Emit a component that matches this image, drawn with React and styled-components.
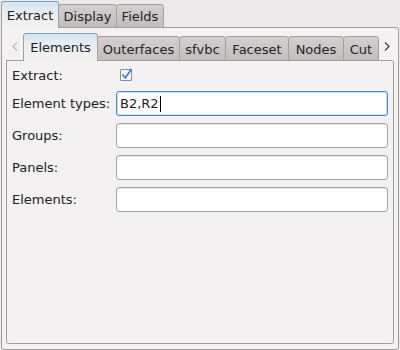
import React from "react";
import styled, { createGlobalStyle } from "styled-components";

const Global = createGlobalStyle`
  html, body { margin: 0; padding: 0; background: #ebe9e9; }
  body { font-family: "DejaVu Sans", "Noto Sans", sans-serif; font-size: 13px; color: #1e1e1e; }
`;

const Window = styled.div`
  width: 398px;
  height: 350px;
  padding-left: 1px;
  display: flex;
  flex-direction: column;
  background: #ebe9e9;
`;

const TabBar = styled.div`
  display: flex;
  align-items: flex-end;
  height: ${(p) => p.$h}px;
  margin-bottom: -1px;
  position: relative;
  z-index: 1;
`;

const Tab = styled.div`
  box-sizing: border-box;
  width: ${(p) => p.$w}px;
  height: ${(p) => (p.$active ? p.$h + 3 : p.$h)}px;
  margin-left: ${(p) => (p.$first ? 0 : -1)}px;
  border: 1px solid #a29e9e;
  border-bottom: ${(p) => (p.$active ? "none" : "1px solid #a29e9e")};
  border-top-color: ${(p) => (p.$active ? "#7f9fb8" : "#a29e9e")};
  border-radius: 3px 3px 0 0;
  background: ${(p) =>
    p.$active
      ? "linear-gradient(#d6e6f3 0%, #eaeff3 45%, #f3f1f1 100%)"
      : "linear-gradient(#d5d0d0, #c2bcbc)"};
  display: flex;
  align-items: center;
  justify-content: center;
  padding-top: ${(p) => (p.$active ? 0 : 1)}px;
  white-space: nowrap;
  position: relative;
  z-index: ${(p) => (p.$active ? 2 : 1)};
  color: #222;
`;

const Pane = styled.div`
  box-sizing: border-box;
  flex: 1;
  display: flex;
  flex-direction: column;
  border: 1px solid #a09c9c;
  border-radius: 0 3px 3px 3px;
  background: #f3f1f1;
  padding: ${(p) => p.$pad};
`;

const ArrowBox = styled.div`
  width: ${(p) => p.$w}px;
  height: 28px;
  display: flex;
  align-items: flex-start;
  justify-content: ${(p) => p.$justify};
  padding-top: 9px;
  box-sizing: border-box;
`;

const Form = styled.div`
  display: grid;
  grid-template-columns: 104px 1fr;
  grid-template-rows: 18px repeat(4, 25px);
  row-gap: 7px;
  padding: 5px 5px 0 5px;
  align-items: center;
`;

const Label = styled.div`
  white-space: nowrap;
  color: #222;
`;

const Check = styled.span`
  box-sizing: border-box;
  display: block;
  width: 12px;
  height: 12px;
  margin-left: 4px;
  border: 1px solid #8e8a8a;
  border-radius: 1px;
  background: #f6f5f5;
  position: relative;
  svg { position: absolute; left: 0; top: -2px; overflow: visible; }
`;

const Field = styled.div`
  box-sizing: border-box;
  height: 25px;
  border: 1px solid ${(p) => (p.$focus ? "#3c8ad8" : "#a5a1a1")};
  box-shadow: ${(p) => (p.$focus ? "inset 0 0 0 1px #cfe3f5" : "inset 0 1px 0 #e6e4e4")};
  border-radius: 3px;
  background: #ffffff;
  display: flex;
  align-items: center;
  padding-left: 3px;
  color: #1e1e1e;
`;

const Caret = styled.span`
  display: inline-block;
  width: 1px;
  height: 16px;
  background: #000;
  margin-left: 1px;
`;

const outerTabs = [
  { t: "Extract", w: 58, active: true },
  { t: "Display", w: 59 },
  { t: "Fields", w: 48 },
];

const innerTabs = [
  { t: "Elements", w: 75, active: true },
  { t: "Outerfaces", w: 83 },
  { t: "sfvbc", w: 47 },
  { t: "Faceset", w: 64 },
  { t: "Nodes", w: 56 },
  { t: "Cut", w: 36 },
];

const Chevron = ({ dir, color }) => (
  <svg width="6" height="9" viewBox="0 0 6 9">
    <path
      d={dir === "left" ? "M5 0.5 L1 4.5 L5 8.5" : "M1 0.5 L5 4.5 L1 8.5"}
      fill="none"
      stroke={color}
      strokeWidth="1.2"
    />
  </svg>
);

export default function App() {
  return (
    <>
      <Global />
      <Window>
        <TabBar $h={28}>
          {outerTabs.map((x, i) => (
            <Tab key={x.t} $w={x.w} $h={24} $active={x.active} $first={i === 0}>
              {x.t}
            </Tab>
          ))}
        </TabBar>
        <Pane $pad="5px 4px 5px 4px">
          <TabBar $h={28}>
            <ArrowBox $w={17} $justify="center">
              <Chevron dir="left" color="#b9b5b5" />
            </ArrowBox>
            {innerTabs.map((x, i) => (
              <Tab key={x.t} $w={x.w} $h={25} $active={x.active} $first={i === 0}>
                {x.t}
              </Tab>
            ))}
            <ArrowBox $w={15} $justify="center">
              <Chevron dir="right" color="#3a3a3a" />
            </ArrowBox>
          </TabBar>
          <Pane $pad="0">
            <Form>
              <Label>Extract:</Label>
              <div>
                <Check>
                  <svg width="12" height="12" viewBox="0 0 12 12">
                    <path d="M1.5 6.5 L4.3 10 L10.5 1" fill="none" stroke="#2f7fd6" strokeWidth="1.6" />
                  </svg>
                </Check>
              </div>
              <Label>Element types:</Label>
              <Field $focus>
                B2,R2
                <Caret />
              </Field>
              <Label>Groups:</Label>
              <Field />
              <Label>Panels:</Label>
              <Field />
              <Label>Elements:</Label>
              <Field />
            </Form>
          </Pane>
        </Pane>
      </Window>
    </>
  );
}
